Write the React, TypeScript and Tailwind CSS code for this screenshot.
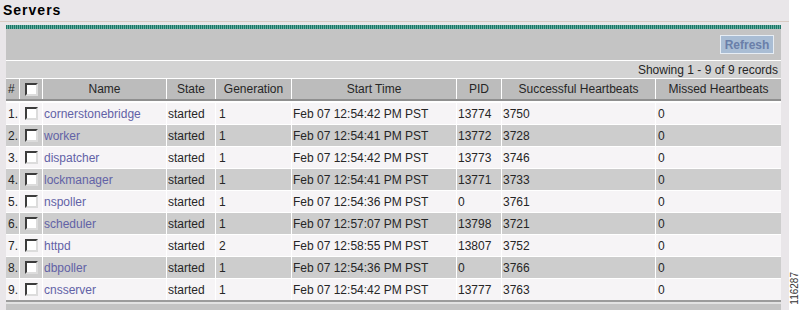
const servers = [
    { name: 'cornerstonebridge', state: 'started', gen: '1', start: 'Feb 07 12:54:42 PM PST', pid: '13774', ok: '3750', missed: '0' },
    { name: 'worker', state: 'started', gen: '1', start: 'Feb 07 12:54:41 PM PST', pid: '13772', ok: '3728', missed: '0' },
    { name: 'dispatcher', state: 'started', gen: '1', start: 'Feb 07 12:54:42 PM PST', pid: '13773', ok: '3746', missed: '0' },
    { name: 'lockmanager', state: 'started', gen: '1', start: 'Feb 07 12:54:41 PM PST', pid: '13771', ok: '3733', missed: '0' },
    { name: 'nspoller', state: 'started', gen: '1', start: 'Feb 07 12:54:36 PM PST', pid: '0', ok: '3761', missed: '0' },
    { name: 'scheduler', state: 'started', gen: '1', start: 'Feb 07 12:57:07 PM PST', pid: '13798', ok: '3721', missed: '0' },
    { name: 'httpd', state: 'started', gen: '2', start: 'Feb 07 12:58:55 PM PST', pid: '13807', ok: '3752', missed: '0' },
    { name: 'dbpoller', state: 'started', gen: '1', start: 'Feb 07 12:54:36 PM PST', pid: '0', ok: '3766', missed: '0' },
    { name: 'cnsserver', state: 'started', gen: '1', start: 'Feb 07 12:54:42 PM PST', pid: '13777', ok: '3763', missed: '0' },
];

const cols = 'grid grid-cols-[13px_23px_124px_49px_76px_165px_45px_154px_126px]';
const cell = 'border-l border-white flex items-center';

function Checkbox() {
    return (
        <div className="w-[13px] h-[13px] bg-white border-2 border-t-[#3c3c3c] border-l-[#3c3c3c] border-b-[#dcdcdc] border-r-[#dcdcdc]" />
    );
}

export default function App() {
    return (
        <div className="w-[801px] h-[310px] flex overflow-hidden bg-white font-['Liberation_Sans',Arial,sans-serif] text-[12px] text-[#262626]">
            <div className="w-[789px] shrink-0 bg-[#e9e6e9]">
                {/* Title */}
                <div className="h-[21px] pl-[3px] pt-[3px] text-[14px] font-bold tracking-[1px] text-black leading-[15px]">
                    Servers
                </div>
                <div className="h-px bg-[#d9cbc3]" />

                {/* Panel */}
                <div className="mt-[3px] ml-[6px] w-[775px]">
                    <div className="h-[4px] bg-[repeating-linear-gradient(90deg,#1e7466_0_1px,#64ae9f_1px_2px)]" />

                    {/* Toolbar */}
                    <div className="h-[31px] bg-[#c4c4c4] flex items-center justify-end pr-[7px]">
                        <button className="w-[54px] h-[19px] bg-[#a9bdd4] border border-[#e6edf4] text-[12px] font-bold text-[#6a7fa9] leading-none">
                            Refresh
                        </button>
                    </div>
                    <div className="h-px bg-white" />
                    <div className="h-[17px] bg-[#d3d3d3] flex items-center justify-end pr-[3px]">
                        Showing 1 - 9 of 9 records
                    </div>
                    <div className="h-px bg-white" />

                    {/* Header */}
                    <div className={`${cols} h-[22px] bg-[#bcbcbc] border-b-2 border-[#8f8f8f]`}>
                        <div className="flex items-center pl-[2px]">#</div>
                        <div className={`${cell} justify-center`}>
                            <Checkbox />
                        </div>
                        <div className={`${cell} justify-center`}>Name</div>
                        <div className={`${cell} justify-center`}>State</div>
                        <div className={`${cell} justify-center`}>Generation</div>
                        <div className={`${cell} justify-center`}>Start Time</div>
                        <div className={`${cell} justify-center`}>PID</div>
                        <div className={`${cell} justify-center`}>Successful Heartbeats</div>
                        <div className={`${cell} justify-center`}>Missed Heartbeats</div>
                    </div>
                    <div className="h-px bg-white" />

                    {/* Rows */}
                    {servers.map((s, i) => (
                        <div
                            key={s.name}
                            className={`${cols} h-[22px] border-t border-white ${i % 2 === 0 ? 'bg-[#f6f4f6]' : 'bg-[#cdcdcd]'}`}
                        >
                            <div className="flex items-center pl-[2px]">{i + 1}.</div>
                            <div className={`${cell} justify-center`}>
                                <Checkbox />
                            </div>
                            <div className={`${cell} pl-px text-[#6262a6]`}>{s.name}</div>
                            <div className={`${cell} pl-px`}>{s.state}</div>
                            <div className={`${cell} pl-[3px]`}>{s.gen}</div>
                            <div className={`${cell} pl-px`}>{s.start}</div>
                            <div className={`${cell} pl-px`}>{s.pid}</div>
                            <div className={`${cell} pl-px`}>{s.ok}</div>
                            <div className={`${cell} pl-[2px]`}>{s.missed}</div>
                        </div>
                    ))}

                    {/* Bottom edge */}
                    <div className="h-[2px] bg-[#9c9c9c]" />
                    <div className="h-[2px] bg-[#e2e2e2]" />
                    <div className="h-[10px] bg-[#c4c4c4]" />
                </div>
            </div>

            {/* Figure number strip */}
            <div className="flex-1 flex flex-col justify-end items-center pb-[5px]">
                <span className="[writing-mode:vertical-rl] rotate-180 text-[10px] leading-none text-[#333]">
                    116287
                </span>
            </div>
        </div>
    );
}
